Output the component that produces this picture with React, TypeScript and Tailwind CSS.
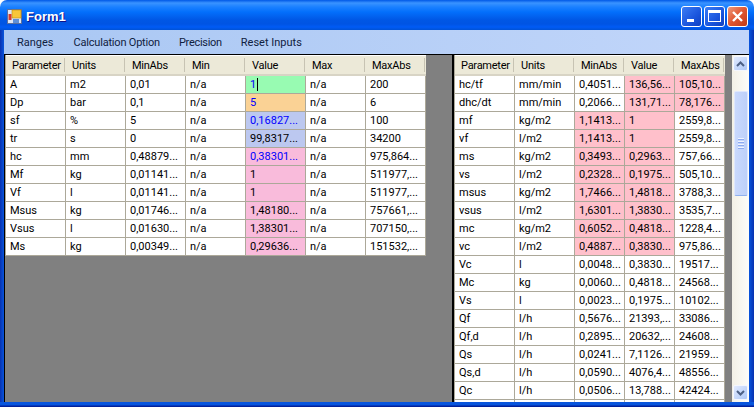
import React from 'react';

type Cell = {
    text: string;
    bg?: string;
    blue?: boolean;
    caret?: boolean;
};

const GREEN = "bg-[#98fbb2]";
const ORANGE = "bg-[#fad295]";
const LAVENDER = "bg-[#bcc8f0]";
const ORCHID = "bg-[#f9bbdb]";
const PINK = "bg-[#ffc0cb]";

const leftHeader = ["Parameter", "Units", "MinAbs", "Min", "Value", "Max", "MaxAbs"];
const rightHeader = ["Parameter", "Units", "MinAbs", "Value", "MaxAbs"];

const leftValue = (text: string, bg: string, blue = false, caret = false): Cell => ({text, bg, blue, caret});

const leftRows: Cell[][] = [
    [{text: "A"}, {text: "m2"}, {text: "0,01"}, {text: "n/a"}, leftValue("1", GREEN, true, true), {text: "n/a"}, {text: "200"}],
    [{text: "Dp"}, {text: "bar"}, {text: "0,1"}, {text: "n/a"}, leftValue("5", ORANGE, true), {text: "n/a"}, {text: "6"}],
    [{text: "sf"}, {text: "%"}, {text: "5"}, {text: "n/a"}, leftValue("0,16827...", LAVENDER, true), {text: "n/a"}, {text: "100"}],
    [{text: "tr"}, {text: "s"}, {text: "0"}, {text: "n/a"}, leftValue("99,8317...", LAVENDER), {text: "n/a"}, {text: "34200"}],
    [{text: "hc"}, {text: "mm"}, {text: "0,48879..."}, {text: "n/a"}, leftValue("0,38301...", ORCHID, true), {text: "n/a"}, {text: "975,864..."}],
    [{text: "Mf"}, {text: "kg"}, {text: "0,01141..."}, {text: "n/a"}, leftValue("1", ORCHID), {text: "n/a"}, {text: "511977,..."}],
    [{text: "Vf"}, {text: "l"}, {text: "0,01141..."}, {text: "n/a"}, leftValue("1", ORCHID), {text: "n/a"}, {text: "511977,..."}],
    [{text: "Msus"}, {text: "kg"}, {text: "0,01746..."}, {text: "n/a"}, leftValue("1,48180...", ORCHID), {text: "n/a"}, {text: "757661,..."}],
    [{text: "Vsus"}, {text: "l"}, {text: "0,01630..."}, {text: "n/a"}, leftValue("1,38301...", ORCHID), {text: "n/a"}, {text: "707150,..."}],
    [{text: "Ms"}, {text: "kg"}, {text: "0,00349..."}, {text: "n/a"}, leftValue("0,29636...", ORCHID), {text: "n/a"}, {text: "151532,..."}],
];

const rightRow = (p: string, u: string, min: string, val: string, max: string, pink: number): Cell[] => [
    {text: p},
    {text: u},
    {text: min, bg: pink === 1 ? PINK : undefined},
    {text: val, bg: pink >= 1 ? PINK : undefined},
    {text: max, bg: pink === 3 ? PINK : undefined},
];

const rightRows: Cell[][] = [
    rightRow("hc/tf", "mm/min", "0,4051...", "136,56...", "105,10...", 3),
    rightRow("dhc/dt", "mm/min", "0,2066...", "131,71...", "78,176...", 3),
    rightRow("mf", "kg/m2", "1,1413...", "1", "2559,8...", 1),
    rightRow("vf", "l/m2", "1,1413...", "1", "2559,8...", 1),
    rightRow("ms", "kg/m2", "0,3493...", "0,2963...", "757,66...", 1),
    rightRow("vs", "l/m2", "0,2328...", "0,1975...", "505,10...", 1),
    rightRow("msus", "kg/m2", "1,7466...", "1,4818...", "3788,3...", 1),
    rightRow("vsus", "l/m2", "1,6301...", "1,3830...", "3535,7...", 1),
    rightRow("mc", "kg/m2", "0,6052...", "0,4818...", "1228,4...", 1),
    rightRow("vc", "l/m2", "0,4887...", "0,3830...", "975,86...", 1),
    rightRow("Vc", "l", "0,0048...", "0,3830...", "19517...", 0),
    rightRow("Mc", "kg", "0,0060...", "0,4818...", "24568...", 0),
    rightRow("Vs", "l", "0,0023...", "0,1975...", "10102...", 0),
    rightRow("Qf", "l/h", "0,5676...", "21393,...", "33086...", 0),
    rightRow("Qf,d", "l/h", "0,2895...", "20632,...", "24608...", 0),
    rightRow("Qs", "l/h", "0,0241...", "7,1126...", "21959...", 0),
    rightRow("Qs,d", "l/h", "0,0590...", "4076,4...", "48556...", 0),
    rightRow("Qc", "l/h", "0,0506...", "13,788...", "42424...", 0),
    rightRow("", "", "", "", "", 0),
];

const Grid = ({header, rows, cols}: {header: string[]; rows: Cell[][]; cols: string}) => (
    <div className="border-l border-[#aca899] bg-white self-start">
        <div className={`grid ${cols} h-[21px] bg-[#ece9d8]`}>
            {header.map((h) => (
                <div key={h} className="flex items-center border-b-2 border-[#d8d4c5] border-t border-t-white">
                    <span className="flex-1 pl-[6px] pt-px tracking-[-0.25px]">{h}</span>
                    <span className="w-px h-[14px] bg-[#c7c3b3] mr-px"></span>
                </div>
            ))}
        </div>
        {rows.map((row, i) => (
            <div key={i} className={`grid ${cols} h-[18px]`}>
                {row.map((c, j) => (
                    <div
                        key={j}
                        className={`flex items-center pl-[4px] border-r border-b border-[#aca899] ${c.bg ?? "bg-white"} ${c.blue ? "text-[#0000ff]" : "text-black"}`}
                    >
                        {c.text}
                        {c.caret && <span className="w-px h-[13px] bg-black ml-px"></span>}
                    </div>
                ))}
            </div>
        ))}
    </div>
);

const CaptionButton = ({bg, children}: {bg: string; children: React.ReactNode}) => (
    <div className={`w-[21px] h-[21px] rounded-[3px] border border-white flex items-center justify-center ${bg}`}>
        {children}
    </div>
);

const ScrollArrow = ({d}: {d: string}) => (
    <div className="w-[15px] h-[15px] mx-auto rounded-[2px] border border-[#f4f7fe] bg-[linear-gradient(135deg,#e1eafe,#aec8f7)] flex items-center justify-center">
        <svg width="9" height="6" viewBox="0 0 9 6">
            <path d={d} fill="none" stroke="#4d6185" strokeWidth="2" />
        </svg>
    </div>
);

export default function App() {
    return (
        <div className="w-[754px] h-[407px] overflow-hidden bg-white flex flex-col text-[11px] leading-none text-black font-['Roboto','Liberation_Sans',sans-serif]">
            <div className="h-[30px] shrink-0 rounded-t-[7px] flex items-center pl-[7px] pr-[6px] pt-[2px] bg-[linear-gradient(to_bottom,#0058e6_0px,#3a93ff_3px,#1a80ff_7px,#036ffc_12px,#0057e5_20px,#0054e3_24px,#005bf5_27px,#0052d6_30px)]">
                <svg width="15" height="15" viewBox="0 0 15 15" className="shrink-0 mt-px">
                    <rect x="0.5" y="0.5" width="14" height="14" fill="#dfe6f5" stroke="#5a6f9e" />
                    <rect x="5" y="1" width="9" height="8" fill="#f8c63a" stroke="#b98a12" strokeWidth="0.6" />
                    <rect x="1.5" y="5" width="3" height="6" fill="#d83a2a" />
                    <rect x="6" y="10" width="6" height="4" fill="#5d8fd8" />
                </svg>
                <span className="ml-1 pt-px text-[13px] font-bold text-white [text-shadow:1px_1px_#0f1089] font-['Liberation_Sans',sans-serif]">Form1</span>
                <div className="ml-auto flex items-center gap-[2px]">
                    <CaptionButton bg="bg-[linear-gradient(135deg,#3c7df5,#1a55dd_60%,#0f3fc0)]">
                        <span className="w-[7px] h-[3px] bg-white mt-[8px] mr-[3px]"></span>
                    </CaptionButton>
                    <CaptionButton bg="bg-[linear-gradient(135deg,#3c7df5,#1a55dd_60%,#0f3fc0)]">
                        <span className="w-[13px] h-[12px] border border-t-[3px] border-white"></span>
                    </CaptionButton>
                    <CaptionButton bg="bg-[linear-gradient(135deg,#ee9a7d,#e0552f_50%,#c23a16)]">
                        <svg width="13" height="13" viewBox="0 0 13 13">
                            <path d="M2 2l9 9M11 2l-9 9" stroke="#ffffff" strokeWidth="2.4" />
                        </svg>
                    </CaptionButton>
                </div>
            </div>

            <div className="flex flex-1 min-h-0">
                <div className="w-[4px] shrink-0 bg-[linear-gradient(to_right,#0831b0,#0855dd)]"></div>
                <div className="flex-1 min-w-0 flex flex-col">
                    <div className="h-[24px] shrink-0 flex items-center pl-[13px] gap-[19px] text-[#10213f] bg-[linear-gradient(to_right,#a9c7f3,#c2d6fa)]">
                        <span>Ranges</span>
                        <span className="ml-px tracking-[-0.2px]">Calculation Option</span>
                        <span className="tracking-[-0.3px]">Precision</span>
                        <span>Reset Inputs</span>
                    </div>
                    <div className="flex flex-1 min-h-0 border-t border-black">
                        <div className="w-[448px] shrink-0 flex border-l border-black bg-[#808080]">
                            <Grid header={leftHeader} rows={leftRows} cols="grid-cols-[repeat(7,60px)]" />
                        </div>
                        <div className="flex-1 min-w-0 flex border-l-2 border-black bg-[#808080]">
                            <Grid header={rightHeader} rows={rightRows} cols="grid-cols-[60px_60px_50px_50px_50px]" />
                            <div className="ml-auto w-[17px] shrink-0 flex flex-col pt-px pb-[2px] bg-[linear-gradient(to_right,#f3f1e6,#fdfdfa)]">
                                <ScrollArrow d="M1 5l3.5-3.5L8 5" />
                                <div className="mt-[20px] mx-auto w-[14px] h-[105px] rounded-[2px] border border-[#dfe8fd] border-b-[#8fb0ef] bg-[linear-gradient(to_right,#c9d9fd,#bdd0f9)] flex flex-col items-center justify-center gap-px">
                                    <span className="w-[6px] h-px bg-[#eef3fe] border-b border-[#8caaf0] box-content"></span>
                                    <span className="w-[6px] h-px bg-[#eef3fe] border-b border-[#8caaf0] box-content"></span>
                                    <span className="w-[6px] h-px bg-[#eef3fe] border-b border-[#8caaf0] box-content"></span>
                                    <span className="w-[6px] h-px bg-[#eef3fe] border-b border-[#8caaf0] box-content"></span>
                                </div>
                                <div className="mt-auto">
                                    <ScrollArrow d="M1 1l3.5 3.5L8 1" />
                                </div>
                            </div>
                        </div>
                    </div>
                </div>
                <div className="w-[5px] shrink-0 bg-[linear-gradient(to_right,#0855dd,#0831b0)]"></div>
            </div>
            <div className="h-[5px] shrink-0 bg-[linear-gradient(to_bottom,#0855dd,#0855dd_50%,#00138c)]"></div>
        </div>
    );
}
